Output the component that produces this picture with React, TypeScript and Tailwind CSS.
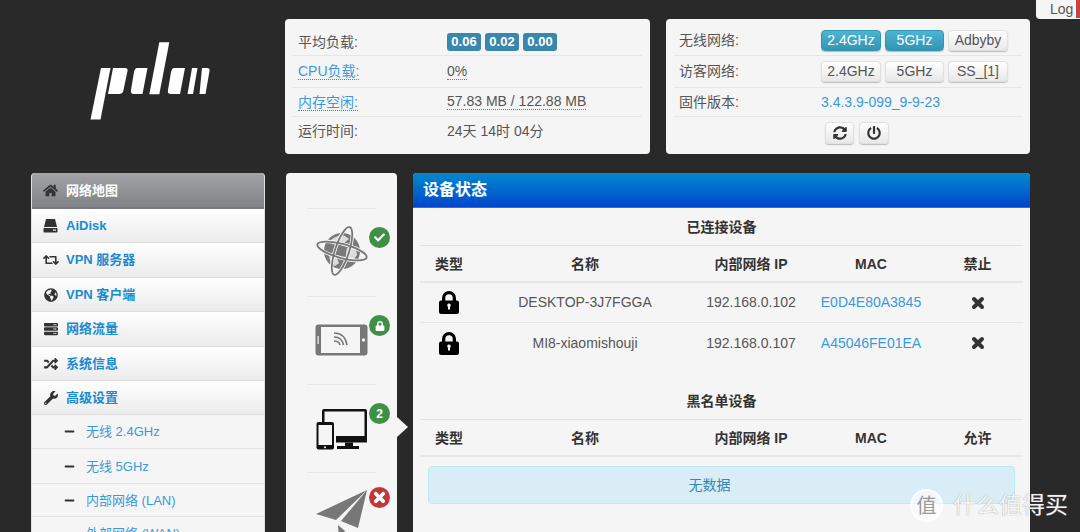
import React from "react";
import { FaHome, FaRetweet, FaGlobeAmericas, FaServer, FaRandom, FaWrench, FaMinus, FaCheck, FaLock, FaSyncAlt, FaPowerOff } from "react-icons/fa";

const Logo = () => (
  <svg width="122" height="78" viewBox="0 0 122 78" fill="#fff">
    <path d="M11 26H20.5L10.5 77.5H0.5Z" />
    <path d="M23 26H35Q38 26 37.5 29L33.5 48Q33 52 29 52H18Z" />
    <path d="M47 26H57.5L52.5 52H44Q40 52 41 48L44 30Q45 26 47 26Z" />
    <path d="M69.3 0.3H79.3L69.3 52.3H59.3Z" />
    <path d="M84 26H95L90 52H81Q77 52 78 48L81 30Q82 26 84 26Z" />
    <path d="M102 26H107.5L103 52H97.5Z" />
    <path d="M112 26H117Q120 26 119.5 29L115.5 52H109.5Z" />
  </svg>
);

const Globe = () => (
  <svg width="52" height="52" viewBox="0 0 52 52">
    <circle cx="26" cy="25" r="18" fill="#7a7a7a" />
    <path d="M15 14q7-6 14-4l4 3-5 4-5-1-3 3-4-1zM31 22l9 1 1 6-5 7-4-3-2-6zM13 28l7 2 3 7-4 3-5-5z" fill="#dcdcdc" />
    <ellipse cx="26" cy="25" rx="26.500" ry="7" transform="rotate(15 26 25)" fill="none" stroke="#f5f5f5" strokeWidth="3.500" />
    <ellipse cx="26" cy="25" rx="26" ry="7" transform="rotate(-72 26 25)" fill="none" stroke="#f5f5f5" strokeWidth="3.500" />
    <ellipse cx="26" cy="25" rx="25.500" ry="7" transform="rotate(15 26 25)" fill="none" stroke="#777" strokeWidth="1.800" />
    <ellipse cx="26" cy="25" rx="25" ry="7" transform="rotate(-72 26 25)" fill="none" stroke="#777" strokeWidth="1.800" />
  </svg>
);

const Tablet = () => (
  <svg width="53" height="32" viewBox="0 0 53 32">
    <rect x="0.5" y="0.5" width="52" height="31" rx="3" fill="#777" />
    <rect x="6" y="3" width="39" height="26" fill="#f5f5f5" />
    <circle cx="48.5" cy="16" r="1.7" fill="#f5f5f5" />
    <rect x="2.5" y="12" width="1.2" height="8" fill="#f5f5f5" />
    <g fill="none" stroke="#777" strokeWidth="1.6">
      <path d="M19 9Q30 9 32 21" />
      <path d="M19 13Q27 13 28.500 21" />
      <path d="M19 17Q24 17 25 21" />
    </g>
  </svg>
);

const Devices = () => (
  <svg width="52" height="42" viewBox="0 0 52 42">
    <path d="M6 14V3Q6 1 8 1H49Q51 1 51 3V32Q51 34 49 34H21V31.500H48.500V3.500H8.500V14Z" fill="#111" />
    <rect x="20" y="28" width="31" height="6.500" fill="#111" />
    <path d="M29 34.500H37V38H43V41H21V38H29Z" fill="#111" />
    <rect x="0.500" y="14" width="17.500" height="27.500" rx="2" fill="#111" />
    <rect x="2.500" y="17" width="13.500" height="20" fill="#f5f5f5" />
    <circle cx="9" cy="39.200" r="1" fill="#f5f5f5" />
  </svg>
);

const Plane = () => (
  <svg width="52" height="50" viewBox="0 0 52 50">
    <path d="M51 0L0 24L20 30Z" fill="#777" />
    <path d="M51 0L25 31L42 38Z" fill="#777" />
    <path d="M22 35L23 50L29 41Z" fill="#777" />
  </svg>
);

const BigLock = () => (
  <svg width="20" height="23" viewBox="0 0 20 23">
    <path d="M3 10V7a7 7 0 0 1 14 0v3h-3.300V7a3.700 3.700 0 0 0-7.400 0v3Z" fill="#000" />
    <rect x="0" y="9.500" width="20" height="13.500" rx="2" fill="#000" />
    <path d="M10 12.500a1.800 1.800 0 0 1 1 3.300v2.700H9v-2.700a1.800 1.800 0 0 1 1-3.300Z" fill="#f5f5f5" />
  </svg>
);

const ThickX = ({ size, color }: { size: number; color: string }) => (
  <svg width={size} height={size} viewBox="0 0 14 14">
    <path d="M3 3L11 11M11 3L3 11" stroke={color} strokeWidth="4" strokeLinecap="round" fill="none" />
  </svg>
);

const Hdd = () => (
  <svg width="15" height="15" viewBox="0 0 15 15" fill="#333">
    <path d="M3 1H12L14 9H1Z" />
    <rect x="0.500" y="10" width="14" height="4.500" rx="0.800" />
    <rect x="10" y="11.500" width="3" height="1.200" fill="#eee" />
  </svg>
);

const Dotted = ({ children, blue }: { children: React.ReactNode; blue?: boolean }) => (
  <span className={`border-b border-dotted border-[#3a87ad] leading-[15px] ${blue ? "text-[#3a9ad9]" : ""}`}>{children}</span>
);

const Row = ({ label, children, h }: { label: React.ReactNode; children: React.ReactNode; h: string }) => (
  <div className={`flex items-center ${h}`}>
    <div className="w-[154px] pl-[5px]">{label}</div>
    <div className="flex items-center">{children}</div>
  </div>
);

const Pill = ({ children }: { children: React.ReactNode }) => (
  <span className="flex h-[18px] w-[34px] items-center justify-center rounded-[3px] bg-[#3a87ad] text-[13px] font-bold text-white">{children}</span>
);

const Btn = ({ children, on, w }: { children: React.ReactNode; on?: boolean; w: string }) => (
  <button
    className={`flex h-[21px] items-center justify-center rounded-[4px] text-[14px] ${w} ${
      on
        ? "border border-[#2f96b4] bg-gradient-to-b from-[#4fb3d2] to-[#2f96b4] text-white shadow-[0_1px_1px_#bbb]"
        : "border border-[#e0e0e0] bg-gradient-to-b from-white to-[#e8e8e8] text-[#555] shadow-[0_1px_1px_#bbb]"
    }`}
  >
    {children}
  </button>
);

const navTop = [
  { icon: <Hdd />, label: "AiDisk", h: "h-[34px]" },
  { icon: <FaRetweet size={16} />, label: "VPN 服务器", h: "h-[35px]" },
  { icon: <FaGlobeAmericas size={14} />, label: "VPN 客户端", h: "h-[34px]" },
  { icon: <FaServer size={14} />, label: "网络流量", h: "h-[35px]" },
  { icon: <FaRandom size={14} />, label: "系统信息", h: "h-[34px]" },
  { icon: <FaWrench size={14} />, label: "高级设置", h: "h-[34px]" },
];
const navSub = [
  { label: "无线 2.4GHz", h: "h-[34px]" },
  { label: "无线 5GHz", h: "h-[35px]" },
  { label: "内部网络 (LAN)", h: "h-[33px]" },
  { label: "外部网络 (WAN)", h: "h-[34px]" },
];

const Badge = ({ children, red, className }: { children: React.ReactNode; red?: boolean; className: string }) => (
  <span className={`absolute flex h-[21px] w-[21px] items-center justify-center rounded-full text-[12px] font-bold text-white ${red ? "bg-[#c0383c]" : "bg-[#3f8f46]"} ${className}`}>
    {children}
  </span>
);

const tableCols = "grid grid-cols-[58px_214px_118px_122px_91px] items-center text-center";

const Head = ({ last }: { last: string }) => (
  <div className={`${tableCols} h-[37px] border-b-2 border-[#e6e6e6] pt-[1px] font-bold text-[#333]`}>
    <div>类型</div>
    <div>名称</div>
    <div>内部网络 IP</div>
    <div>MAC</div>
    <div>{last}</div>
  </div>
);

const Device = ({ name, ip, mac, line }: { name: string; ip: string; mac: string; line?: boolean }) => (
  <div className={`${tableCols} h-[40px] ${line ? "border-b border-[#e6e6e6]" : ""}`}>
    <div className="flex justify-center"><BigLock /></div>
    <div>{name}</div>
    <div>{ip}</div>
    <div className="text-[#3a9ad9]">{mac}</div>
    <div className="flex justify-center"><ThickX size={14} color="#333" /></div>
  </div>
);

export default function App() {
  return (
    <div className="relative h-[532px] w-[1080px] overflow-hidden bg-[#292929] font-['Liberation_Sans','Noto_Sans_CJK_SC',sans-serif] text-[14px] text-[#555]">
      <div className="absolute right-0 top-0 flex h-[19px] w-[44px] items-center rounded-bl-[4px] bg-[#f5f5f5] pl-[14px]">
        <span>Log</span>
        <span className="absolute right-0 top-0 h-[18px] w-[4px] bg-[#c9403c]" />
      </div>

      <div className="flex pl-[31px] pt-[19px]">
        <div className="w-[254px] pl-[59px] pt-[23px]"><Logo /></div>
        <div className="h-[135px] w-[365px] rounded-[4px] bg-[#f5f5f5] px-[8px] pt-[10px]">
          <Row label="平均负载:" h="h-[27px] border-b border-[#e6e6e6]">
            <div className="flex gap-[4px]"><Pill>0.06</Pill><Pill>0.02</Pill><Pill>0.00</Pill></div>
          </Row>
          <Row label={<Dotted blue>CPU负载:</Dotted>} h="h-[32px] border-b border-[#e6e6e6]"><Dotted>0%</Dotted></Row>
          <Row label={<Dotted blue>内存空闲:</Dotted>} h="h-[29px] border-b border-[#e6e6e6]"><Dotted>57.83 MB / 122.88 MB</Dotted></Row>
          <Row label="运行时间:" h="h-[29px]">24天 14时 04分</Row>
        </div>
        <div className="ml-[16px] h-[135px] w-[364px] rounded-[4px] bg-[#f5f5f5] px-[8px] pt-[6px]">
          <div className="flex h-[31px] items-center border-b border-[#e6e6e6]">
            <div className="w-[147px] pl-[5px]">无线网络:</div>
            <div className="flex gap-[4px]"><Btn on w="w-[60px]">2.4GHz</Btn><Btn on w="w-[59px]">5GHz</Btn><Btn w="w-[60px]">Adbyby</Btn></div>
          </div>
          <div className="flex h-[32px] items-center border-b border-[#e6e6e6]">
            <div className="w-[147px] pl-[5px]">访客网络:</div>
            <div className="flex gap-[4px]"><Btn w="w-[60px]">2.4GHz</Btn><Btn w="w-[59px]">5GHz</Btn><Btn w="w-[60px]">SS_[1]</Btn></div>
          </div>
          <div className="flex h-[29px] items-center border-b border-[#e6e6e6]">
            <div className="w-[147px] pl-[5px]">固件版本:</div>
            <div className="text-[#3a9ad9]">3.4.3.9-099_9-9-23</div>
          </div>
          <div className="flex gap-[5px] pl-[151px] pt-[5px]">
            <button className="flex h-[22px] w-[29px] items-center justify-center rounded-[4px] border border-[#e0e0e0] bg-gradient-to-b from-white to-[#e8e8e8] text-[#333] shadow-[0_1px_1px_#bbb]"><FaSyncAlt size={14} /></button>
            <button className="flex h-[22px] w-[30px] items-center justify-center rounded-[4px] border border-[#e0e0e0] bg-gradient-to-b from-white to-[#e8e8e8] text-[#333] shadow-[0_1px_1px_#bbb]"><FaPowerOff size={14} /></button>
          </div>
        </div>
      </div>

      <div className="mt-[19px] flex pl-[31px]">
        <nav className="w-[234px] overflow-hidden rounded-t-[4px] border-x border-[#e0e0e0] bg-[#f5f5f5] text-[13px]">
          <div className="flex h-[36px] items-center border-b-2 border-[#77797c] bg-gradient-to-b from-[#a2a4a8] to-[#808285] font-bold text-white">
            <span className="flex w-[34px] justify-center pl-[3px] text-[#333]"><FaHome size={15} /></span>
            <span className="pt-[2px]">网络地图</span>
          </div>
          {navTop.map((n) => (
            <div key={n.label} className={`flex ${n.h} items-center border-b border-[#dedede] bg-gradient-to-b from-white to-[#ebebeb] font-bold text-[#1a8bd0]`}>
              <span className="flex w-[34px] justify-center pl-[3px] text-[#333]">{n.icon}</span>
              <span>{n.label}</span>
            </div>
          ))}
          {navSub.map((s) => (
            <div key={s.label} className={`flex ${s.h} items-center border-b border-[#e2e2e2] text-[#3a9ad9]`}>
              <span className="flex w-[54px] justify-start pl-[32px] text-[#333]"><FaMinus size={11} /></span>
              <span className="pt-[1px]">{s.label}</span>
            </div>
          ))}
        </nav>

        <div className="relative ml-[21px] h-[400px] w-[111px] rounded-t-[4px] bg-[#f5f5f5] px-[21px] pt-[35px]">
          {[
            { icon: <Globe />, pad: "pt-[17px]", badge: <Badge className="left-[62px] top-[18px]"><FaCheck size={11} /></Badge> },
            { icon: <Tablet />, pad: "pt-[27px]", badge: <Badge className="left-[62px] top-[18px]"><FaLock size={10} /></Badge> },
            { icon: <Devices />, pad: "pt-[23px]", badge: <Badge className="left-[62px] top-[18px]">2</Badge> },
            { icon: <Plane />, pad: "pt-[17px]", badge: <Badge red className="left-[62px] top-[14px]"><ThickX size={13} color="#fff" /></Badge> },
          ].map((c, i) => (
            <div key={i} className={`relative h-[88px] border-t border-[#e6e6e6] ${c.pad}`}>
              <div className="flex justify-center">{c.icon}</div>
              {c.badge}
            </div>
          ))}
          <span className="absolute left-[111px] top-[244px] h-0 w-0 border-y-[10px] border-l-[11px] border-y-transparent border-l-[#f5f5f5]" />
        </div>

        <div className="ml-[16px] w-[617px] overflow-hidden rounded-t-[4px] bg-[#f5f5f5]">
          <div className="flex h-[35px] items-center border-b border-[#3a6fd0] bg-gradient-to-b from-[#0088cc] to-[#0044cc] pl-[10px] text-[16px] font-bold text-white">设备状态</div>
          <div className="px-[7px]">
            <div className="flex h-[38px] items-center justify-center border-b border-[#e0e0e0] pt-[1px] font-bold text-[#333]">已连接设备</div>
            <Head last="禁止" />
            <Device name="DESKTOP-3J7FGGA" ip="192.168.0.102" mac="E0D4E80A3845" line />
            <Device name="MI8-xiaomishouji" ip="192.168.0.107" mac="A45046FE01EA" />
            <div className="mt-[19px] flex h-[38px] items-center justify-center border-b border-[#e0e0e0] pt-[1px] font-bold text-[#333]">黑名单设备</div>
            <Head last="允许" />
            <div className="mx-[8px] mt-[9px] flex h-[38px] items-center justify-center rounded-[4px] border border-[#bce8f1] bg-[#d9edf7] pr-[24px] text-[#3a87ad]">无数据</div>
          </div>
        </div>
      </div>

      <div className="absolute left-[910px] top-[489px] flex items-center gap-[10px]">
        <span className="flex h-[33px] w-[33px] items-center justify-center rounded-full border-2 border-white/80 bg-white/60 text-[20px] text-[#999]">值</span>
        <span className="text-[23px] leading-none text-white/90 [text-shadow:0_0_1px_#888]">什么值得买</span>
      </div>
    </div>
  );
}
